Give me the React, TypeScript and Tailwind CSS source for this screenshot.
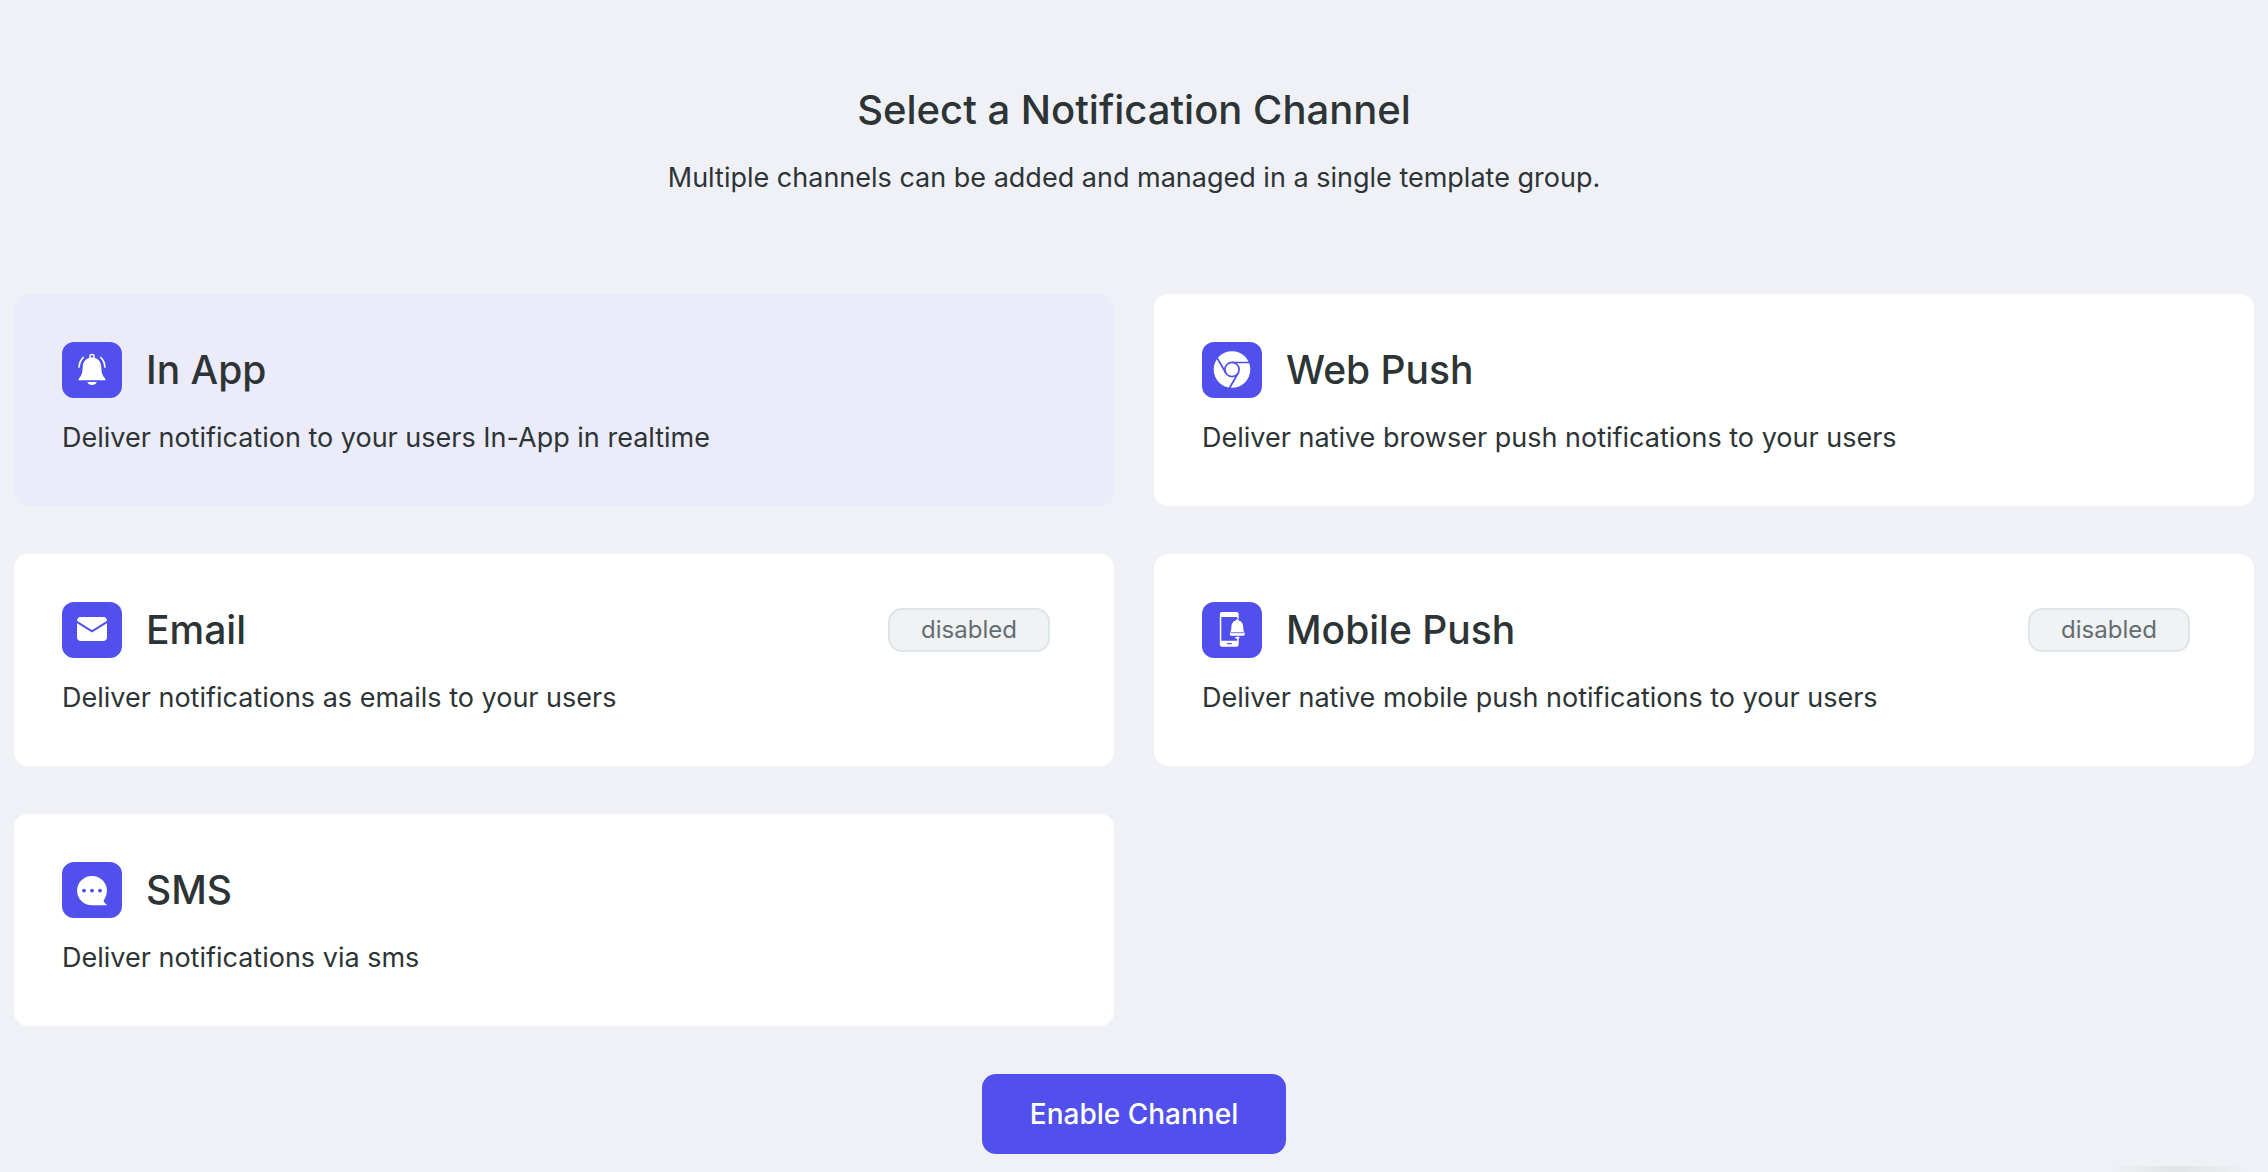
import { useState } from "react";
import type { ReactNode } from "react";

function IconTile({ children }: { children: ReactNode }) {
  return (
    <span className="h-14 w-[60px] shrink-0 rounded-xl bg-[#5150ec] text-white">
      <svg viewBox="0 0 60 56" className="h-full w-full" fill="currentColor" aria-hidden="true">
        {children}
      </svg>
    </span>
  );
}

const BLUE = "#5150ec";

const BellIcon = (
  <>
    <circle cx="30" cy="14.6" r="2.1" fill="none" stroke="currentColor" strokeWidth="1.4" />
    <path d="M30 15.4c5.5 0 8.800 3.600 9.200 9 .4 6 .8 8.600 3.900 12 .8.9.6 1.900-.6 1.900h-25c-1.200 0-1.400-1-.6-1.900 3.100-3.400 3.500-6 3.900-12 .4-5.400 3.700-9 9.200-9z" />
    <path d="M25.300 39.900h9.400c-.7 1.900-2.500 3-4.700 3s-4-1.100-4.700-3z" />
    <path d="M21.200 15.500c-2.300 2.300-3.900 5.600-4.100 9.500M38.800 15.500c2.300 2.300 3.900 5.600 4.100 9.500" fill="none" stroke="currentColor" strokeWidth="1.700" strokeLinecap="round" />
  </>
);

const ChromeIcon = (
  <>
    <circle cx="30" cy="27.500" r="18.300" />
    <path d="M30 20.500H47.500M23.900 31L14.800 15.500M36.100 31L27.300 46.500" fill="none" stroke={BLUE} strokeWidth="1.700" />
    <circle cx="30" cy="27.500" r="7.100" stroke={BLUE} strokeWidth="1.700" />
  </>
);

const MailIcon = (
  <>
    <rect x="15" y="15" width="30" height="24" rx="4" />
    <path d="M14.500 19.600L30 29.300l15.500-9.700" fill="none" stroke={BLUE} strokeWidth="1.900" />
  </>
);

const MobileIcon = (
  <>
    <path fillRule="evenodd" d="M20 10h14.500a2.200 2.200 0 0 1 2.200 2.200v30.400a2.200 2.200 0 0 1-2.200 2.200H20a2.200 2.200 0 0 1-2.200-2.200V12.200A2.200 2.200 0 0 1 20 10zM19.300 15v23.800h15.900V15z" />
    <path d="M25.300 41.600h4" stroke={BLUE} strokeWidth="1.200" strokeLinecap="round" />
    <path d="M35.300 17.300c.8 0 1.400.6 1.500 1.200 2.800.8 4.300 3 4.400 6.100.1 2.700.2 4.500 1.300 6.100.5.900.4 3-1 3H29.100c-1.400 0-1.500-2.100-1-3 1.100-1.600 1.200-3.400 1.300-6.100.1-3.100 1.600-5.300 4.400-6.100.1-.6.700-1.200 1.500-1.200z" stroke={BLUE} strokeWidth="1.600" paintOrder="stroke" />
    <path d="M28.500 30.700h13.600" stroke={BLUE} strokeWidth=".8" />
    <path d="M32.800 35.100h5c-.5 1.200-1.300 1.900-2.500 1.900s-2-.7-2.500-1.900z" />
  </>
);

const ChatIcon = (
  <>
    <path d="M30 14a14.900 14.600 0 0 1 14.900 14.600c0 4-1.300 7.200-3.200 9.700-.3 1.500.8 2.700 2.600 4 .6.500.4 1-.3 1H30A14.900 14.650 0 0 1 30 14z" />
    <g fill={BLUE}>
      <circle cx="22" cy="28.600" r="1.900" />
      <circle cx="30" cy="28.600" r="1.900" />
      <circle cx="38" cy="28.600" r="1.900" />
    </g>
  </>
);

type Channel = { name: string; text: string; icon: ReactNode; disabled?: boolean };

const channels: Channel[] = [
  { name: "In App", text: "Deliver notification to your users In-App in realtime", icon: BellIcon },
  { name: "Web Push", text: "Deliver native browser push notifications to your users", icon: ChromeIcon },
  { name: "Email", text: "Deliver notifications as emails to your users", icon: MailIcon, disabled: true },
  { name: "Mobile Push", text: "Deliver native mobile push notifications to your users", icon: MobileIcon, disabled: true },
  { name: "SMS", text: "Deliver notifications via sms", icon: ChatIcon },
];

export default function App() {
  const [selected, setSelected] = useState("In App");

  return (
    <main className="relative min-h-screen overflow-hidden bg-[#f0f1f6] px-3.5 pt-20 pb-4 font-['Inter',sans-serif] text-[#2d3436]">
      <header className="text-center">
        <h1 className="text-[40px] leading-[60px] font-medium">Select a Notification Channel</h1>
        <p className="mt-4 text-[27px] leading-[44px]">
          Multiple channels can be added and managed in a single template group.
        </p>
      </header>

      <div className="mt-[94px] grid grid-cols-2 gap-x-10 gap-y-12">
        {channels.map((c) => (
          <button
            key={c.name}
            type="button"
            disabled={c.disabled}
            aria-pressed={selected === c.name}
            onClick={() => setSelected(c.name)}
            className={`rounded-[14px] p-12 text-left ${selected === c.name ? "bg-[#ebebf9]" : "bg-white"}`}
          >
            <span className="flex items-center">
              <IconTile>{c.icon}</IconTile>
              <span className="ml-6 text-[39px] leading-[56px] font-medium">{c.name}</span>
              {c.disabled && (
                <span className="mr-4 ml-auto flex h-11 w-[162px] items-center justify-center rounded-[14px] border-2 border-[#dfe6e9] bg-[#f1f2f4] text-2xl text-[#636e72]">
                  disabled
                </span>
              )}
            </span>
            <span className="mt-5 block text-[27px] leading-[40px]">{c.text}</span>
          </button>
        ))}
      </div>

      <div className="mt-12 flex justify-center">
        <button type="button" className="h-20 min-w-[304px] rounded-[14px] bg-[#5150ec] px-12 text-[28px] font-medium text-white">
          Enable Channel
        </button>
      </div>

      <div className="absolute right-5 bottom-0 h-1.5 w-[140px] bg-linear-to-r from-[#f0f1f6] via-[#e2e3e6] to-[#f0f1f6]" />
    </main>
  );
}
